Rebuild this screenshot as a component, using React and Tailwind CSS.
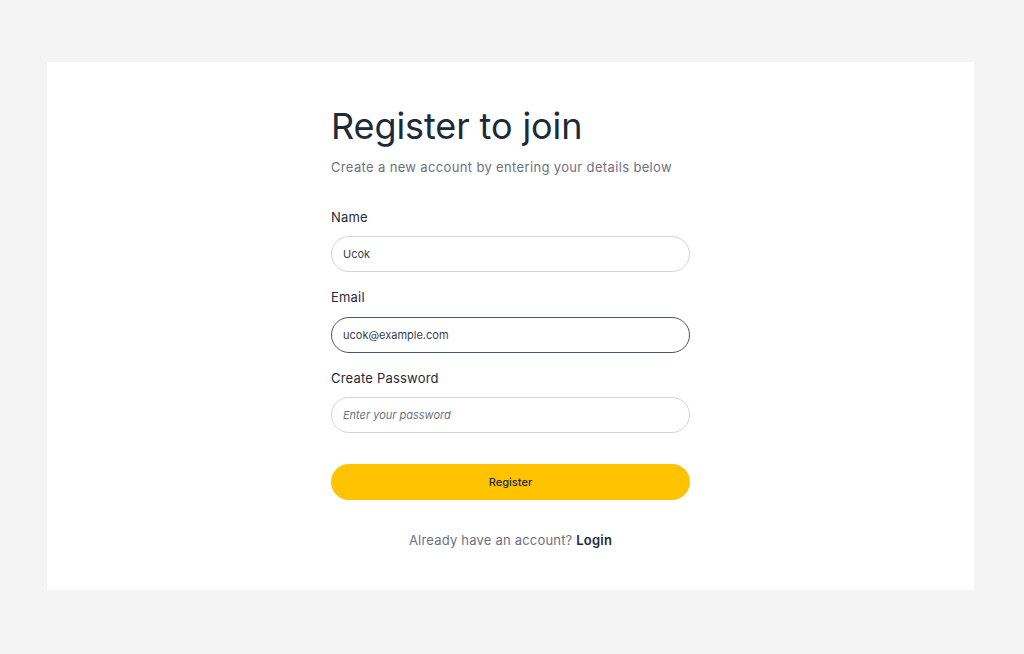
export default function App() {
  return (
    <div className="min-h-screen bg-[#f4f4f4] px-[47px] py-[62px]" style={{ fontFamily: 'Inter, "Noto Sans", sans-serif' }}>
      <div className="flex h-[528px] w-[927px] justify-center bg-white pt-[42px]">
        <div className="w-[359px]">
          <h1 className="text-[36px] leading-[44px] font-normal tracking-[-0.1px] text-[#1c2a3a]">Register to join</h1>
          <p className="mt-[10px] text-[13px] tracking-[0.35px] text-[#6b7280]">Create a new account by entering your details below</p>

          <form className="mt-[30px]">
            <label className="block text-[13px] tracking-[0.2px] text-[#1f2937]">Name</label>
            <input
              defaultValue="Ucok"
              className="mt-[9px] h-[36px] w-full rounded-full border border-[#d4d4d8] px-[11px] text-[11px] text-[#374151] outline-none"
            />
            <label className="mt-[16px] block text-[13px] tracking-[0.2px] text-[#1f2937]">Email</label>
            <input
              defaultValue="ucok@example.com"
              className="mt-[9px] h-[36px] w-full rounded-full border border-[#4b5563] px-[11px] text-[11px] text-[#374151] outline-none"
            />
            <label className="mt-[16px] block text-[13px] tracking-[0.2px] text-[#1f2937]">Create Password</label>
            <input
              type="password"
              placeholder="Enter your password"
              className="mt-[9px] h-[36px] w-full rounded-full border border-[#d4d4d8] px-[11px] text-[11px] italic text-[#374151] outline-none placeholder:text-[#6b7280]"
            />
            <button
              type="button"
              className="mt-[31px] h-[36px] w-full rounded-full bg-[#ffc300] text-[11px] font-medium text-[#1f2937]"
            >
              Register
            </button>
          </form>

          <p className="mt-[31px] text-center text-[13px] tracking-[0.2px] text-[#6b7280]">
            Already have an account? <a className="font-semibold text-[#1c2a3a]">Login</a>
          </p>
        </div>
      </div>
    </div>
  )
}
